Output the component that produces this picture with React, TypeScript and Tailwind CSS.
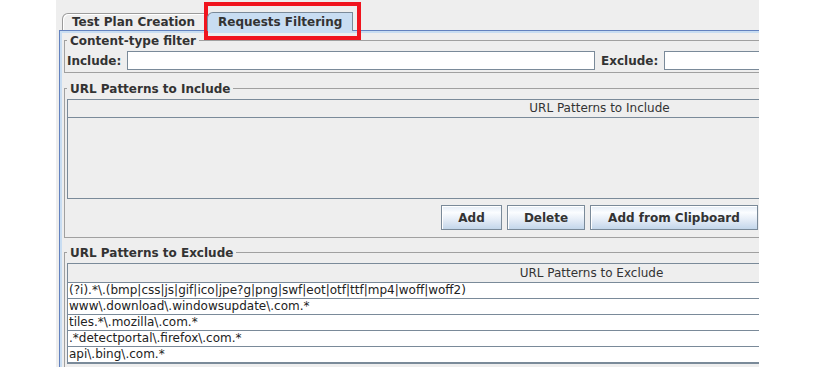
import React from 'react';

const EXCLUDE_PATTERNS = [
  '(?i).*\\.(bmp|css|js|gif|ico|jpe?g|png|swf|eot|otf|ttf|mp4|woff|woff2)',
  'www\\.download\\.windowsupdate\\.com.*',
  'tiles.*\\.mozilla\\.com.*',
  '.*detectportal\\.firefox\\.com.*',
  'api\\.bing\\.com.*',
];

function Legend({ children }: { children: React.ReactNode }) {
  return (
    <legend className="px-[3px] leading-[14px] font-bold text-[#333]">
      <span className="relative top-[1px]">{children}</span>
    </legend>
  );
}

function SwingButton({ label, width }: { label: string; width: string }) {
  return (
    <button
      className={`${width} h-[25px] border border-[#7a8a99] font-bold text-[#333] bg-[linear-gradient(to_bottom,#e3ecf6_0%,#fbfdff_28%,#e8eff8_55%,#c3d6ea_100%)] shadow-[inset_1px_1px_0_#fff]`}
    >
      {label}
    </button>
  );
}

export default function App() {
  return (
    <div className="relative w-[815px] h-[367px] overflow-hidden bg-white flex font-['DejaVu_Sans',sans-serif] text-[12px] text-[#333]">
      <div className="w-[56px] shrink-0" />

      <div className="w-[703px] h-full shrink-0 bg-[#eeeeee] overflow-hidden">
        {/* Tabs */}
        <div className="h-[30px] flex items-end pl-[6px]">
          <div className="w-[143px] h-[17px] flex items-center pl-[9px] border-l border-t border-r border-[#9a9a9a] rounded-tl-[6px] shadow-[inset_1px_1px_0_#fff] font-bold whitespace-nowrap">
            Test Plan Creation
          </div>
          <div className="relative z-10 ml-[2px] -mb-px w-[146px] h-[19px] flex items-center pl-[10px] border-l border-t border-r border-[#7a8a99] rounded-tl-[6px] bg-[#c8ddf2] font-bold whitespace-nowrap">
            Requests Filtering
          </div>
        </div>

        {/* Tab content */}
        <div className="ml-[3px] border-l border-t border-[#6382bf]">
          <div className="border-l-2 border-t-2 border-[#c8ddf2] pl-[2px] w-[1090px]">
            <fieldset className="w-[1071px] border border-[#a0a0a0] px-[2px] pt-[4px] pb-[2px]">
              <Legend>Content-type filter</Legend>
              <div className="flex items-center">
                <span className="font-bold w-[60px]">Include:</span>
                <div className="w-[468px] h-[19px] bg-white border border-[#7a8a99]" />
                <span className="font-bold ml-[6px] w-[63px]">Exclude:</span>
                <div className="w-[468px] h-[19px] bg-white border border-[#7a8a99]" />
              </div>
            </fieldset>

            <fieldset className="mt-[8px] w-[1071px] border border-[#a0a0a0] px-[2px] pt-[4px] pb-[7px]">
              <Legend>URL Patterns to Include</Legend>
              <div className="h-[100px] border border-[#7a8a99] flex flex-col">
                <div className="h-[18px] border-b border-[#7a8a99] flex items-center justify-center leading-[17px]">
                  URL Patterns to Include
                </div>
                <div className="flex-1" />
              </div>
              <div className="mt-[6px] flex justify-center gap-[5px]">
                <SwingButton label="Add" width="w-[61px]" />
                <SwingButton label="Delete" width="w-[78px]" />
                <SwingButton label="Add from Clipboard" width="w-[168px]" />
              </div>
            </fieldset>

            <fieldset className="mt-[7px] w-[1071px] border border-[#a0a0a0] px-[2px] pt-[4px] pb-[6px]">
              <Legend>URL Patterns to Exclude</Legend>
              <div className="border border-[#7a8a99] flex">
                <div className="flex-1">
                  <div className="h-[19px] border-b border-[#7a8a99] flex items-center justify-center">
                    URL Patterns to Exclude
                  </div>
                  {EXCLUDE_PATTERNS.map((p, idx) => (
                    <div
                      key={idx}
                      className="h-[16px] border-b border-[#7a8a99] bg-white px-[1px] leading-[15px] whitespace-nowrap text-[#222]"
                    >
                      {p}
                    </div>
                  ))}
                </div>
                <div className="w-[16px] border-l border-[#7a8a99] bg-[#eeeeee]" />
              </div>
            </fieldset>
          </div>
        </div>
      </div>

      {/* Highlight box over the selected tab */}
      <div className="absolute left-[204px] top-[2px] w-[157px] h-[38px] border-4 border-[#f0141e]" />
    </div>
  );
}
